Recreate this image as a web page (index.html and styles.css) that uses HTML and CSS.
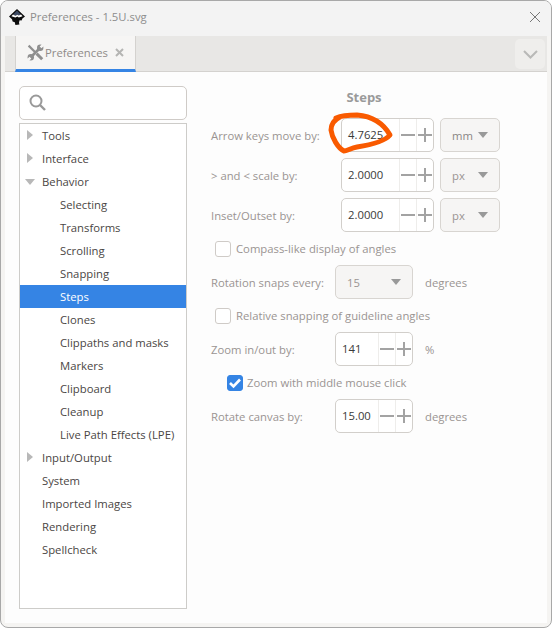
FILE: index.html
```html
<!DOCTYPE html>
<html>
<head>
<meta name="viewport" content="width=device-width, initial-scale=1">
<title>Preferences - 1.5U.svg</title>
<link rel="stylesheet" href="styles.css">
</head>
<body>

<div class="window">
  <div class="titlebar">
    <svg class="app-logo" width="18" height="18" viewBox="0 0 18 18">
      <path d="M9 1 L17 8.6 L14.4 10.6 L13.6 12.4 L11.6 12.2 L11 14.6 L11.4 16.6 L7.4 17 L6.8 14.2 L4.6 13.6 L4 11.2 L1 8.6 Z" fill="#0c0c0c"/>
      <path d="M9 2.6 L12.8 6.4 L10.8 7.6 L9.4 6.8 L7.4 7.8 L5.2 6.4 Z" fill="#3d4a63"/>
      <path d="M5 6.6 L7.4 7.8 L9.4 6.8 L10.8 7.6 L13 6.4 L14.6 8.2 L10.8 9.4 L9.4 8.6 L7.4 9.6 L3.4 8.2 Z" fill="#fff"/>
    </svg>
    <span class="title">Preferences - 1.5U.svg</span>
    <svg class="close" width="12" height="12" viewBox="0 0 12 12"><path d="M1 1 L11 11 M11 1 L1 11" stroke="#777" stroke-width="1" fill="none"/></svg>
  </div>

  <div class="tabbar">
    <div class="tab">
      <svg class="tab-icon" width="17" height="17" viewBox="0 0 17 17">
        <path d="M4.5 12.5 L12.5 4.5" stroke="#8f8f8f" stroke-width="2.6" fill="none"/>
        <circle cx="13.2" cy="3.8" r="3.2" fill="#8f8f8f"/>
        <circle cx="3.8" cy="13.2" r="3.2" fill="#8f8f8f"/>
        <path d="M13.6 3.4 L16.6 0.4 M3.4 13.6 L0.4 16.6" stroke="#f6f5f4" stroke-width="2.6" fill="none"/>
        <path d="M1.6 1.6 L8 8" stroke="#8f8f8f" stroke-width="2.2" fill="none"/>
        <path d="M9.6 9.6 L15.2 15.2" stroke="#8f8f8f" stroke-width="3" fill="none"/>
      </svg>
      <span class="tab-label">Preferences</span>
      <svg width="9" height="9" viewBox="0 0 9 9"><path d="M1 1 L8 8 M8 1 L1 8" stroke="#b5b5b3" stroke-width="2" fill="none"/></svg>
    </div>
    <div class="tab-menu">
      <svg width="15" height="9" viewBox="0 0 15 9"><path d="M1 1 L7.5 7.5 L14 1" stroke="#b9b9b7" stroke-width="2" fill="none"/></svg>
    </div>
  </div>

  <div class="content">
    <div class="sidebar">
      <div class="search">
        <svg width="18" height="18" viewBox="0 0 18 18"><circle cx="7" cy="7" r="5.5" stroke="#999" stroke-width="2" fill="none"/><path d="M11 11 L16 16" stroke="#999" stroke-width="2.4"/></svg>
      </div>
      <ul class="tree">
        <li class="top closed">Tools</li>
        <li class="top closed">Interface</li>
        <li class="top open">Behavior</li>
        <li class="sub">Selecting</li>
        <li class="sub">Transforms</li>
        <li class="sub">Scrolling</li>
        <li class="sub">Snapping</li>
        <li class="sub selected">Steps</li>
        <li class="sub">Clones</li>
        <li class="sub">Clippaths and masks</li>
        <li class="sub">Markers</li>
        <li class="sub">Clipboard</li>
        <li class="sub">Cleanup</li>
        <li class="sub">Live Path Effects (LPE)</li>
        <li class="top closed">Input/Output</li>
        <li class="top">System</li>
        <li class="top">Imported Images</li>
        <li class="top">Rendering</li>
        <li class="top">Spellcheck</li>
      </ul>
    </div>

    <div class="panel">
      <h2 class="panel-title">Steps</h2>

      <div class="row wide">
        <label>Arrow keys move by:</label>
        <div class="spin"><span class="value">4.7625</span><span class="btn minus"></span><span class="btn plus"></span></div>
        <div class="unit"><span class="unit-dark">mm</span><i class="arrow"></i></div>
      </div>
      <div class="row wide">
        <label>&gt; and &lt; scale by:</label>
        <div class="spin"><span class="value">2.0000</span><span class="btn minus"></span><span class="btn plus"></span></div>
        <div class="unit"><span>px</span><i class="arrow"></i></div>
      </div>
      <div class="row wide">
        <label>Inset/Outset by:</label>
        <div class="spin"><span class="value">2.0000</span><span class="btn minus"></span><span class="btn plus"></span></div>
        <div class="unit"><span>px</span><i class="arrow"></i></div>
      </div>

      <div class="check-row"><span class="check"></span>Compass-like display of angles</div>

      <div class="row">
        <label>Rotation snaps every:</label>
        <div class="combo"><span>15</span><i class="arrow"></i></div>
        <span class="suffix">degrees</span>
      </div>

      <div class="check-row"><span class="check"></span>Relative snapping of guideline angles</div>

      <div class="row">
        <label>Zoom in/out by:</label>
        <div class="spin short"><span class="value">141</span><span class="btn minus"></span><span class="btn plus"></span></div>
        <span class="suffix">%</span>
      </div>

      <div class="check-row indented">
        <span class="check on"><svg width="14" height="12" viewBox="0 0 14 12"><path d="M2 6 L5.5 9.5 L12 2.5" stroke="#fff" stroke-width="2.6" fill="none"/></svg></span>Zoom with middle mouse click
      </div>

      <div class="row">
        <label>Rotate canvas by:</label>
        <div class="spin short"><span class="value">15.00</span><span class="btn minus"></span><span class="btn plus"></span></div>
        <span class="suffix">degrees</span>
      </div>

      <svg class="scribble" width="72" height="48" viewBox="0 0 72 48">
        <path d="M11 8 C18 5 25 5 32 5 C44 6 57 11 65 25 C60 31 45 35 32 37 C26 38 22 41 19 41 C13 38 7 28 6 20 C6 14 9 10 15 7" stroke="#f95a00" stroke-width="5" fill="none" stroke-linecap="round" stroke-linejoin="round"/>
      </svg>
    </div>
  </div>
</div>

</body>
</html>
```

FILE: styles.css
```css
* {
  box-sizing: border-box;
}

html, body {
  margin: 0;
  height: 100%;
  background: #fff;
}

body {
  font-family: "Open Sans", "Noto Sans", sans-serif;
  font-size: 11.3px;
  color: #9a9492;
  overflow: hidden;
}

.window {
  width: 552px;
  height: 628px;
  background: #f5f4f2;
  border: 1px solid #a8a8a8;
  border-radius: 8px;
  display: flex;
  flex-direction: column;
  overflow: hidden;
}

.titlebar {
  height: 35px;
  flex: none;
  background: #f3f3f3;
  display: flex;
  align-items: center;
  padding: 0 10px 4px 7px;
}

.app-logo {
  margin-right: 4px;
}

.title {
  flex: 1;
  color: #8d8d8d;
}

.tabbar {
  height: 36px;
  flex: none;
  margin: 0 4px;
  background: #e8e7e5;
  border-bottom: 1px solid #d4d2cf;
  display: flex;
  justify-content: space-between;
  padding-left: 10px;
}

.tab {
  width: 121px;
  height: 36px;
  background: #f6f5f4;
  border-left: 1px solid #d4d2cf;
  border-right: 1px solid #d4d2cf;
  border-bottom: 3px solid #3584e4;
  display: flex;
  align-items: center;
  gap: 1px;
  padding: 0 0 0 11px;
}

.tab-label {
  color: #8f8b89;
  margin-right: 6px;
}

.tab-menu {
  width: 30px;
  height: 30px;
  margin: 3px 2px 0 0;
  background: #efeeec;
  border-radius: 5px;
  display: flex;
  align-items: center;
  justify-content: center;
}

.content {
  flex: 1;
  display: flex;
  margin: 0 4px 4px;
  background: #fdfdfd;
  padding: 14px 0 14px 14px;
}

.sidebar {
  width: 168px;
  flex: none;
  display: flex;
  flex-direction: column;
  gap: 3px;
}

.search {
  height: 34px;
  flex: none;
  border: 1px solid #cfcbc7;
  border-radius: 5px;
  background: #fff;
  display: flex;
  align-items: center;
  padding-left: 9px;
}

.tree {
  flex: 1;
  list-style: none;
  margin: 0;
  padding: 0;
  background: #fff;
  border: 1px solid #cdccc9;
  color: #4a4644;
}

.tree li {
  height: 23px;
  line-height: 23px;
  position: relative;
}

.tree .top {
  padding-left: 22px;
}

.tree .sub {
  padding-left: 40px;
}

.tree .selected {
  background: #3584e4;
  color: #fff;
}

.tree .closed::before {
  content: "";
  position: absolute;
  left: 7px;
  top: 6px;
  border-style: solid;
  border-width: 5.5px 0 5.5px 6px;
  border-color: transparent transparent transparent #b8b8b8;
}

.tree .open::before {
  content: "";
  position: absolute;
  left: 5px;
  top: 9px;
  border-style: solid;
  border-width: 6px 5.5px 0 5.5px;
  border-color: #b8b8b8 transparent transparent transparent;
}

.panel {
  flex: 1;
  position: relative;
  display: flex;
  flex-direction: column;
  gap: 6px;
  padding-left: 24px;
}

.panel-title {
  margin: 0;
  height: 26px;
  font-size: 13px;
  font-weight: 700;
  color: #9a9a9a;
  text-align: center;
  padding-right: 30px;
  line-height: 23px;
}

.row {
  height: 34px;
  display: flex;
  align-items: center;
}

.row label {
  width: 124px;
  flex: none;
}

.row.wide label {
  width: 130px;
}

.spin {
  width: 93px;
  height: 34px;
  display: flex;
  background: #fff;
  border: 1px solid #d2cfcb;
  border-radius: 5px;
}

.spin.short {
  width: 78px;
}

.value {
  flex: 1;
  line-height: 32px;
  padding-left: 6px;
  color: #3a3a3a;
}

.btn {
  width: 17px;
  position: relative;
  border-left: 1px solid #eeedeb;
}

.btn::before {
  content: "";
  position: absolute;
  left: 1px;
  right: 1px;
  top: 15px;
  height: 2px;
  background: #a3a3a3;
}

.btn.plus::after {
  content: "";
  position: absolute;
  left: 7px;
  top: 9px;
  width: 2px;
  height: 14px;
  background: #a3a3a3;
}

.unit {
  width: 60px;
  height: 34px;
  margin-left: 6px;
  background: #f6f5f4;
  border: 1px solid #d8d5d1;
  border-radius: 5px;
  display: flex;
  align-items: center;
  justify-content: space-between;
  padding: 0 11px;
}

.unit-dark {
  color: #8a8684;
}

.arrow {
  display: block;
  border-style: solid;
  border-width: 6px 5.5px 0 5.5px;
  border-color: #999 transparent transparent transparent;
}

.combo {
  width: 78px;
  height: 34px;
  background: #f6f5f4;
  border: 1px solid #d8d5d1;
  border-radius: 5px;
  display: flex;
  align-items: center;
  justify-content: space-between;
  padding: 0 11px;
}

.suffix {
  margin-left: 12px;
}

.check-row {
  height: 21px;
  display: flex;
  align-items: center;
  gap: 5px;
  padding-left: 4px;
}

.check-row.indented {
  padding-left: 16px;
  gap: 4px;
}

.check {
  width: 16px;
  height: 16px;
  flex: none;
  background: #fff;
  border: 1px solid #cfcbc7;
  border-radius: 3px;
}

.check.on {
  background: #3584e4;
  border-color: #3584e4;
  display: flex;
  align-items: center;
  justify-content: center;
}

.scribble {
  position: absolute;
  left: 138px;
  top: 24px;
}
```
